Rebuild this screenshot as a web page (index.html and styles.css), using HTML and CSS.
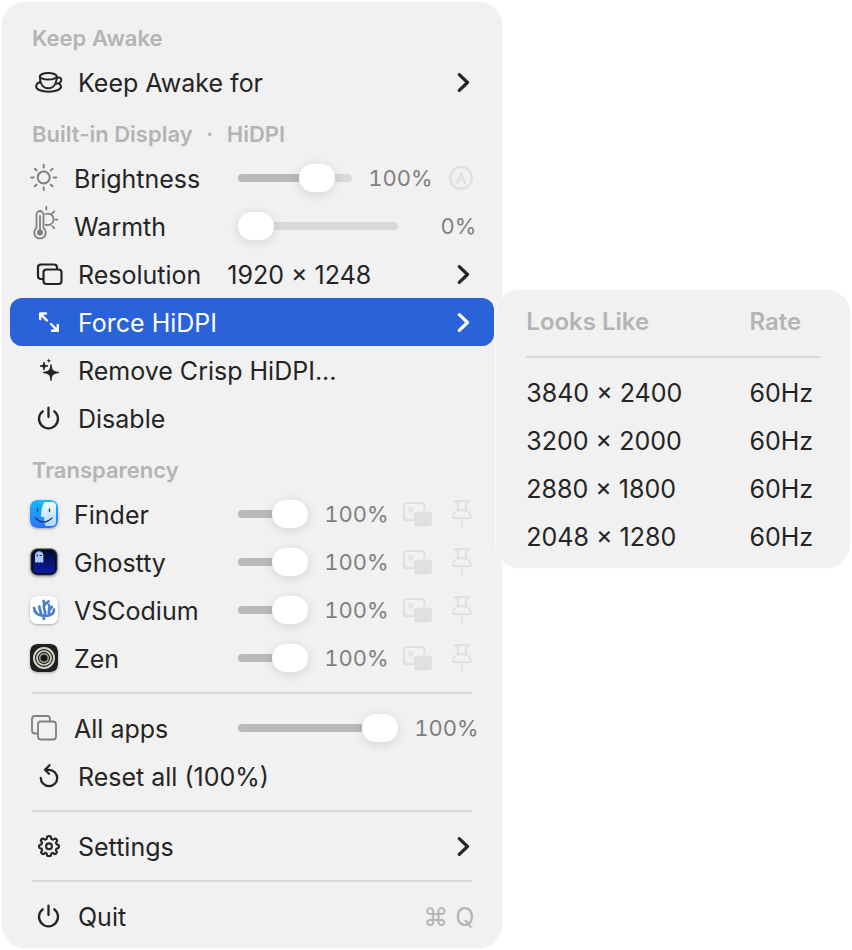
FILE: index.html
```
<!DOCTYPE html>
<html lang="en">

	<head>
		<meta charset="utf-8" />
		<title>Display menu</title>
		<link rel="stylesheet" href="styles.css">
	</head>

	<body>
		<svg class="defs" aria-hidden="true">
			<symbol id="chevron" viewBox="0 0 14 20">
				<path d="M3.3 2.7L11.5 10.5L3.3 18.3" fill="none" stroke="currentColor" stroke-width="3.2" stroke-linecap="round" stroke-linejoin="round" />
			</symbol>
			<symbol id="power" viewBox="0 0 30 30">
				<path d="M8.7 8.3A9.5 9.5 0 1 0 20.3 8.3M14.5 4.7V14" fill="none" stroke="currentColor" stroke-width="2.3" stroke-linecap="round" />
			</symbol>
			<symbol id="overlay" viewBox="0 0 30 26">
				<path d="M10.5 19H4.5Q2 19 2 16.5V4.5Q2 2 4.5 2H20Q22.5 2 22.5 4.5V8.5" fill="none" stroke="currentColor" stroke-width="2.2" stroke-linecap="round" />
				<path d="M5.8 6L9.5 9.5M10 6V10H6" fill="none" stroke="currentColor" stroke-width="1.7" />
				<rect x="12" y="10.5" width="18" height="15" rx="3.5" fill="currentColor" />
			</symbol>
			<symbol id="pin" viewBox="0 0 20 28">
				<path d="M3 1H17L13.8 4V9.8C17 11.5 18.8 14 18.8 18H1.2C1.2 14 3 11.5 6.2 9.8V4ZM6.5 10.5Q10 9.5 13.5 10.5M10 18V27" fill="none" stroke="currentColor" stroke-width="2" stroke-linecap="round" stroke-linejoin="round" />
			</symbol>
		</svg>

		<nav class="menu">
			<h2>Keep Awake</h2>
			<ul>
				<li>
					<button class="item">
						<svg class="icon" viewBox="0 0 30 30" fill="none" stroke="currentColor" stroke-width="2">
							<ellipse cx="14.3" cy="9.3" rx="8.5" ry="3.3" />
							<path d="M5.8 9.3C5.8 16 8.5 21.3 14.3 21.3S22.8 16 22.8 9.3M22.8 11C25 9.8 27.3 10.5 27.3 13C27.3 15.7 24.5 17 21.5 16.6M6.5 14.8C3.5 15.8 2.2 17.8 2.2 19.5C2.2 22.7 7.5 24.7 14.6 24.7S27 22.7 27 19.5C27 18.4 26.2 17.4 25 16.5" />
						</svg>
						<span>Keep Awake for</span>
						<svg class="chevron"><use href="#chevron" /></svg>
					</button>
				</li>
			</ul>

			<h2>Built-in Display <span class="dot">·</span> HiDPI</h2>
			<ul>
				<li class="control">
					<svg class="icon" viewBox="0 0 28 28" fill="none" stroke="currentColor" stroke-width="2" stroke-linecap="round">
						<circle cx="13.7" cy="13.5" r="6" />
						<path d="M13.7 1V3.5M13.7 23.5V26M1.2 13.5H3.7M23.7 13.5H26.2M4.9 4.7L6.6 6.4M20.8 20.6L22.5 22.3M4.9 22.3L6.6 20.6M20.8 6.4L22.5 4.7" />
					</svg>
					<label for="brightness">Brightness</label>
					<input type="range" id="brightness" value="78" style="--fill: 78%">
					<output for="brightness">100%</output>
					<button class="action" aria-label="Automatic brightness">
						<svg class="auto" viewBox="0 0 24 24" fill="none" stroke="currentColor" stroke-width="2.2" stroke-linecap="round" stroke-linejoin="round">
							<circle cx="12" cy="12" r="10.8" />
							<path d="M8 17L12 7L16 17M9.5 13.7H14.5" />
						</svg>
					</button>
				</li>
				<li class="control">
					<svg class="icon tall" viewBox="0 0 28 34" fill="none" stroke="currentColor" stroke-width="1.8" stroke-linecap="round">
						<path d="M6.5 22V8.5A3.5 3.5 0 0 1 13.5 8.5V22A5.8 5.8 0 1 1 6.5 22Z" />
						<path d="M10 10V25" stroke-width="1.8" />
						<circle cx="10" cy="26.5" r="3" fill="currentColor" stroke="none" />
						<path d="M15.8 8A5.7 5.7 0 1 1 15.8 18.6M16.3 1V3.5M25.6 13.7H28M22.3 7.3L24.3 5.3M22.3 20.1L24.3 22.1" />
					</svg>
					<label for="warmth">Warmth</label>
					<input type="range" id="warmth" value="0" style="--fill: 0%">
					<output for="warmth">0%</output>
				</li>
				<li>
					<button class="item">
						<svg class="icon" viewBox="0 0 30 30" fill="none" stroke="currentColor" stroke-width="2.2">
							<rect x="9.5" y="10.5" width="18" height="14.5" rx="3" />
							<path d="M9.5 20H7Q4 20 4 17V8.5Q4 5.5 7 5.5H20Q23 5.5 23 8.5V10.5" />
						</svg>
						<span>Resolution</span>
						<span class="current">1920 × 1248</span>
						<svg class="chevron"><use href="#chevron" /></svg>
					</button>
				</li>
				<li class="open">
					<button class="item selected" aria-expanded="true">
						<svg class="icon" viewBox="0 0 30 30" fill="none" stroke="currentColor" stroke-width="2.4" stroke-linecap="round" stroke-linejoin="round">
							<path d="M13 13.5L6.5 7M6.2 12V6.5H12M17 17L23.3 23.3M18 23.8H23.8V18" />
						</svg>
						<span>Force HiDPI</span>
						<svg class="chevron"><use href="#chevron" /></svg>
					</button>
					<div class="submenu">
						<table>
							<thead>
								<tr>
									<th>Looks Like</th>
									<th>Rate</th>
								</tr>
							</thead>
							<tbody>
								<tr>
									<td>3840 × 2400</td>
									<td>60Hz</td>
								</tr>
								<tr>
									<td>3200 × 2000</td>
									<td>60Hz</td>
								</tr>
								<tr>
									<td>2880 × 1800</td>
									<td>60Hz</td>
								</tr>
								<tr>
									<td>2048 × 1280</td>
									<td>60Hz</td>
								</tr>
							</tbody>
						</table>
					</div>
				</li>
				<li>
					<button class="item">
						<svg class="icon" viewBox="0 0 30 30" fill="currentColor">
							<path d="M17 9.5C17.8 15.5 18.5 16.3 25 17.5C18.5 18.7 17.8 19.5 17 25.5C16.2 19.5 15.5 18.7 9 17.5C15.5 16.3 16.2 15.5 17 9.5Z" stroke="currentColor" />
							<path d="M10 7C10.4 10.2 10.8 10.6 14 11C10.8 11.4 10.4 11.8 10 15C9.6 11.8 9.2 11.4 6 11C9.2 10.6 9.6 10.2 10 7Z" stroke="currentColor" />
							<path d="M14.8 3C15.1 5.2 15.3 5.4 17.5 5.7C15.3 6 15.1 6.2 14.8 8.4C14.5 6.2 14.3 6 12.1 5.7C14.3 5.4 14.5 5.2 14.8 3Z" />
						</svg>
						<span>Remove Crisp HiDPI...</span>
					</button>
				</li>
				<li>
					<button class="item">
						<svg class="icon"><use href="#power" /></svg>
						<span>Disable</span>
					</button>
				</li>
			</ul>

			<h2>Transparency</h2>
			<ul>
				<li class="control">
					<svg class="icon app" viewBox="0 0 28 28">
						<defs>
							<linearGradient id="finder-back" x2="0" y2="1">
								<stop offset="0" stop-color="#18b9fd" />
								<stop offset="1" stop-color="#2c72fa" />
							</linearGradient>
							<linearGradient id="finder-face" x2="0" y2="1">
								<stop offset="0" stop-color="#f4fbff" />
								<stop offset="1" stop-color="#a9d8fe" />
							</linearGradient>
						</defs>
						<rect width="28" height="28" rx="7" fill="url(#finder-back)" />
						<path d="M14.5 2H22Q26 2 26 6V22Q26 26 22 26H15.5Q14 22 14 17H11C11 11 12 6 14.5 2Z" fill="url(#finder-face)" />
						<path d="M7.5 9V11.5M19.5 9V11.5M5.5 18Q13.5 26 22 18" fill="none" stroke="#164064" stroke-width="1.3" stroke-linecap="round" />
					</svg>
					<label for="finder">Finder</label>
					<input type="range" id="finder" value="100" style="--fill: 100%">
					<output for="finder">100%</output>
					<button class="action" aria-label="Overlay Finder"><svg class="overlay"><use href="#overlay" /></svg></button>
					<button class="action" aria-label="Pin Finder"><svg class="pin"><use href="#pin" /></svg></button>
				</li>
				<li class="control">
					<svg class="icon app" viewBox="0 0 28 28">
						<defs>
							<linearGradient id="ghostty-back" x2="0" y2="1">
								<stop offset="0" stop-color="#020a2e" />
								<stop offset="1" stop-color="#0a1cad" />
							</linearGradient>
						</defs>
						<rect x="0.5" y="0.5" width="27" height="27" rx="7" fill="#222327" stroke="#85868a" />
						<rect x="2.5" y="2.5" width="23" height="23" rx="5" fill="url(#ghostty-back)" stroke="#080a15" />
						<path d="M5 14V7.5A4.2 4.2 0 0 1 13.4 7.5V14Q11.8 15.3 10.5 14Q9.2 15.3 7.9 14Q6.5 15.3 5 14Z" fill="#a9c8ff" />
						<path d="M6.5 6.5L8 7.5L6.5 8.5M9.7 7.5H12" fill="none" stroke="#172f72" />
					</svg>
					<label for="ghostty">Ghostty</label>
					<input type="range" id="ghostty" value="100" style="--fill: 100%">
					<output for="ghostty">100%</output>
					<button class="action" aria-label="Overlay Ghostty"><svg class="overlay"><use href="#overlay" /></svg></button>
					<button class="action" aria-label="Pin Ghostty"><svg class="pin"><use href="#pin" /></svg></button>
				</li>
				<li class="control">
					<svg class="icon app" viewBox="0 0 28 28">
						<rect width="28" height="28" rx="7" fill="#fff" />
						<path d="M13.8 23V19.5C9 20 5.5 17.5 4 12M6 17L4.5 15M10.5 19C12.5 16 8.5 13.5 9.5 10.5M14 20C18 16 11.5 13 14.5 8L13.5 5M14.5 9L18.5 5.5M15 20C20 20 24 18.5 24 13.5M19.5 18.5C17 15 21 12 19 9M19.5 14L22 11" fill="none" stroke="#4a7fcc" stroke-width="2.7" stroke-linecap="round" stroke-linejoin="round" />
					</svg>
					<label for="vscodium">VSCodium</label>
					<input type="range" id="vscodium" value="100" style="--fill: 100%">
					<output for="vscodium">100%</output>
					<button class="action" aria-label="Overlay VSCodium"><svg class="overlay"><use href="#overlay" /></svg></button>
					<button class="action" aria-label="Pin VSCodium"><svg class="pin"><use href="#pin" /></svg></button>
				</li>
				<li class="control">
					<svg class="icon app" viewBox="0 0 28 28" fill="none" stroke="#d6d3c8">
						<rect width="28" height="28" rx="7" fill="#202020" stroke="none" />
						<circle cx="14" cy="14" r="10" stroke-width="2" />
						<circle cx="14" cy="14" r="7" stroke-width="1.7" />
						<circle cx="14" cy="14" r="4.3" stroke="#aaa79f" stroke-width="1.4" />
						<circle cx="14" cy="14" r="2" fill="#111" stroke="none" />
					</svg>
					<label for="zen">Zen</label>
					<input type="range" id="zen" value="100" style="--fill: 100%">
					<output for="zen">100%</output>
					<button class="action" aria-label="Overlay Zen"><svg class="overlay"><use href="#overlay" /></svg></button>
					<button class="action" aria-label="Pin Zen"><svg class="pin"><use href="#pin" /></svg></button>
				</li>
			</ul>

			<hr>
			<ul>
				<li class="control">
					<svg class="icon" viewBox="0 0 28 28" fill="none" stroke="currentColor" stroke-width="1.8">
						<rect x="8" y="7.5" width="18" height="18" rx="3" />
						<path d="M8 19.5H5Q2 19.5 2 16.5V5Q2 2 5 2H17Q20 2 20 5V7.5" />
					</svg>
					<label for="all">All apps</label>
					<input type="range" id="all" value="100" style="--fill: 100%">
					<output for="all">100%</output>
				</li>
				<li>
					<button class="item">
						<svg class="icon" viewBox="0 0 30 30" fill="none" stroke="currentColor" stroke-width="2.3" stroke-linecap="round" stroke-linejoin="round">
							<path d="M6.8 17A8.2 8.2 0 1 0 15 8.8H11M15.5 4.3L11 8.8L15 12.8" />
						</svg>
						<span>Reset all (100%)</span>
					</button>
				</li>
			</ul>

			<hr>
			<ul>
				<li>
					<button class="item">
						<svg class="icon" viewBox="0 0 30 30" fill="none" stroke="currentColor" stroke-width="2.1" stroke-linejoin="round">
							<path d="M13.2 5.5Q15 4.7 16.8 5.5L17.4 8L19.2 8.7L21.4 7.5Q23 8 23.2 9.6L21.9 11.8L22.5 13.2L24.7 14.2Q25.5 15.5 24.7 16.8L22.5 17.7L21.9 19.2L23 21.4Q22.4 23 20.6 23.2L18.8 21.8L17.4 22.4L16.8 24.7Q15 25.5 13.2 24.7L12.6 22.4L11.2 21.8L9.4 23.2Q7.6 23 7 21.4L8.1 19.2L7.5 17.7L5.3 16.8Q4.5 15.5 5.3 14.2L7.5 13.2L8.1 11.8L6.8 9.6Q7 8 8.6 7.5L10.8 8.7L12.6 8Z" />
							<circle cx="15" cy="15.3" r="2.9" />
						</svg>
						<span>Settings</span>
						<svg class="chevron"><use href="#chevron" /></svg>
					</button>
				</li>
			</ul>

			<hr>
			<ul>
				<li>
					<button class="item">
						<svg class="icon"><use href="#power" /></svg>
						<span>Quit</span>
						<kbd>⌘ Q</kbd>
					</button>
				</li>
			</ul>
		</nav>
	</body>

</html>
```
FILE: styles.css
```
* {
	box-sizing: border-box;
}

body {
	margin: 0;
	padding: 2px;
	background: #fff;
	color: #242424;
	font-family: Inter, "Liberation Sans", sans-serif;
	font-size: 25px;
	line-height: 30px;
}

button {
	padding: 0;
	border: 0;
	background: none;
	color: inherit;
	font: inherit;
}

.defs {
	display: none;
}

.menu {
	width: 59%;
	padding: 8px;
	border-radius: 24px;
	background: #f1f1f1;
	box-shadow: 0 0 2px rgba(0, 0, 0, 0.08);
}

h2 {
	height: 48px;
	margin: 0;
	padding: 12px 22px 0;
	color: #b4b4b4;
	font-size: 22px;
	font-weight: 600;
	line-height: 32px;
}

.dot {
	margin: 0 8px;
}

ul {
	list-style: none;
	margin: 0;
	padding: 0;
}

hr {
	height: 2px;
	margin: 10px 22px;
	border: 0;
	background: #d9d9d9;
}

.item,
.control {
	display: flex;
	align-items: center;
	width: 100%;
	height: 48px;
}

.item {
	gap: 14px;
	padding: 0 24px;
	border-radius: 12px;
	text-align: left;
}

.item span,
.item kbd,
.control label {
	padding-top: 2px;
}

.item .icon {
	flex: none;
	width: 30px;
	height: 30px;
}

.item .chevron {
	width: 14px;
	height: 20px;
	margin-left: auto;
}

.item .current {
	margin-left: 12px;
}

.item kbd {
	margin-left: auto;
	margin-right: -4px;
	color: #b4b4b4;
	font-family: inherit;
	font-size: 25px;
}

.selected {
	background: #2962d9;
	color: #fff;
}

.control {
	gap: 16px;
	padding: 0 18px 0 20px;
}

.control .icon {
	flex: none;
	width: 28px;
	height: 28px;
	color: #808080;
}

.control .tall {
	height: 34px;
	margin-bottom: 6px;
}

.control .app {
	border-radius: 7px;
	box-shadow: 0 1px 3px rgba(0, 0, 0, 0.3);
}

.control label {
	flex: none;
	width: 148px;
}

.control output {
	flex: none;
	width: 62px;
	color: #808080;
	font-size: 22px;
	font-variant-numeric: tabular-nums;
	text-align: right;
	white-space: nowrap;
}

input[type="range"] {
	-webkit-appearance: none;
	appearance: none;
	flex: 1;
	min-width: 0;
	height: 28px;
	margin: 0;
	background: none;
}

input[type="range"]::-webkit-slider-runnable-track {
	height: 8px;
	border-radius: 4px;
	background: linear-gradient(to right, #b9b9b9 var(--fill), #d9d9d9 var(--fill));
}

input[type="range"]::-webkit-slider-thumb {
	-webkit-appearance: none;
	width: 36px;
	height: 28px;
	margin-top: -10px;
	border-radius: 14px;
	background: #fff;
	box-shadow: 0 2px 12px rgba(0, 0, 0, 0.12);
}

.action {
	display: flex;
	flex: none;
	align-items: center;
	justify-content: center;
	width: 30px;
	height: 30px;
	color: #e0e0e0;
}

.action + .action {
	width: 28px;
}

.auto {
	width: 24px;
	height: 24px;
}

.overlay {
	width: 30px;
	height: 26px;
}

.pin {
	width: 20px;
	height: 28px;
}

.open {
	position: relative;
}

.submenu {
	position: absolute;
	top: -8px;
	left: calc(100% + 2px);
	width: 73%;
	padding: 8px 30px;
	border-radius: 24px;
	background: #f1f1f1;
	box-shadow: 0 0 0 1px #fafafa;
}

table {
	width: 100%;
	border-collapse: separate;
	border-spacing: 0;
}

th,
td {
	height: 48px;
	padding: 2px 0 0;
	text-align: left;
	white-space: nowrap;
}

th {
	height: 60px;
	padding: 0 0 10px;
	border-bottom: 2px solid #d9d9d9;
	color: #b4b4b4;
	font-size: 24px;
	font-weight: 600;
}

th:first-child {
	width: 76%;
}

tbody tr:first-child td {
	height: 58px;
	padding-top: 12px;
}
```
